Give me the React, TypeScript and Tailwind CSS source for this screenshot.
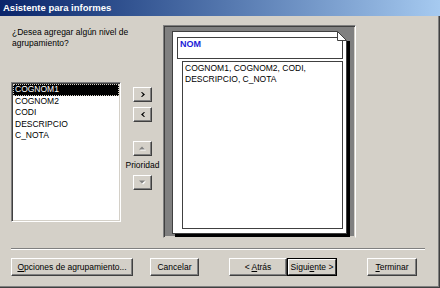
import React from "react";

const raised =
  "bg-[#d4d0c8] border border-t-white border-l-white border-r-[#404040] border-b-[#404040] shadow-[inset_-1px_-1px_#808080]";

function WinButton({
  children,
  className = "",
  isDefault = false,
}: {
  children: React.ReactNode;
  className?: string;
  isDefault?: boolean;
}) {
  if (isDefault) {
    return (
      <div className={`h-[18px] border border-black ${className}`}>
        <div className="flex h-full items-center justify-center border border-t-white border-l-white border-r-[#404040] border-b-[#404040] bg-[#d4d0c8]">
          {children}
        </div>
      </div>
    );
  }
  return (
    <div className={`flex h-[18px] items-center justify-center ${raised} ${className}`}>
      {children}
    </div>
  );
}

function SmallButton({ children }: { children: React.ReactNode }) {
  return (
    <div className={`flex h-[15px] w-[19px] items-center justify-center ${raised}`}>
      {children}
    </div>
  );
}

function Chevron({ dir }: { dir: "left" | "right" }) {
  return (
    <svg width="4" height="5" viewBox="0 0 4 5">
      {dir === "right" ? (
        <path d="M0 0h1l3 2.5-3 2.5H0l2-2.5z" fill="#000" />
      ) : (
        <path d="M4 0H3L0 2.5 3 5h1L2 2.5z" fill="#000" />
      )}
    </svg>
  );
}

function GrayArrow({ dir }: { dir: "up" | "down" }) {
  const d = dir === "up" ? "M1 4.5 4 1.5 7 4.5z" : "M1 1.5 4 4.5 7 1.5z";
  return (
    <svg width="9" height="7" viewBox="0 0 9 7">
      <path d={d} fill="#fff" transform="translate(1 1)" />
      <path d={d} fill="#808080" />
    </svg>
  );
}

const fields = ["COGNOM1", "COGNOM2", "CODI", "DESCRIPCIO", "C_NOTA"];

export default function App() {
  return (
    <div
      className="flex h-[288px] w-[440px] flex-col bg-[#d4d0c8] text-[8.5px] text-black shadow-[inset_-1px_-1px_#404040,inset_-2px_-2px_#808080]"
      style={{ fontFamily: '"Liberation Sans", Arial, sans-serif' }}
    >
      {/* title bar */}
      <div className="flex h-[16px] items-center bg-linear-to-r from-[#0a246a] to-[#a6caf0] pl-[3px] text-[9.5px] font-bold text-white">
        Asistente para informes
      </div>

      <div className="flex px-[11px] pt-[9px]">
        {/* left column */}
        <div className="flex w-[152px] flex-col">
          <p className="mt-[2px] ml-[1px] w-[130px] leading-[11px]">
            ¿Desea agregar algún nivel de agrupamiento?
          </p>

          <div className="mt-[33px] flex">
            <div className="h-[140px] w-[110px] border border-t-[#808080] border-l-[#808080] border-r-white border-b-white bg-white shadow-[inset_1px_1px_#404040,inset_-1px_-1px_#d4d0c8]">
              <ul className="px-[1px] pt-[1px]">
                {fields.map((f, i) => (
                  <li
                    key={f}
                    className={`pl-[2px] leading-[11.5px] ${
                      i === 0
                        ? "bg-black text-white outline-1 -outline-offset-1 outline-dotted outline-[#d4d0c8]"
                        : ""
                    }`}
                  >
                    {f}
                  </li>
                ))}
              </ul>
            </div>

            <div className="ml-[2px] flex w-[39px] flex-col items-center pt-[5px]">
              <SmallButton>
                <Chevron dir="right" />
              </SmallButton>
              <div className="mt-[5px]">
                <SmallButton>
                  <Chevron dir="left" />
                </SmallButton>
              </div>
              <div className="mt-[19px]">
                <SmallButton>
                  <GrayArrow dir="up" />
                </SmallButton>
              </div>
              <div className="flex h-[19px] items-center">Prioridad</div>
              <SmallButton>
                <GrayArrow dir="down" />
              </SmallButton>
            </div>
          </div>
        </div>

        {/* preview panel */}
        <div className="h-[213px] w-[193px] border border-t-[#808080] border-l-[#808080] border-r-white border-b-[#d4d0c8] bg-[#808080] shadow-[inset_1px_1px_#404040,inset_-1px_-1px_#d4d0c8]">
          <div className="relative mt-[5px] ml-[8px] h-[203px] w-[175px] border border-[#404040] bg-white pt-[5px] pl-[4px] shadow-[3px_3px_0_#000]">
            {/* folded corner */}
            <svg
              className="absolute -top-[1px] -right-[5px]"
              width="14"
              height="14"
              viewBox="0 0 14 14"
            >
              <path d="M0 0H14V14H13V10H10Z" fill="#808080" />
              <path d="M0.5 0.5V9.5H9.5Z" fill="#fff" stroke="#404040" strokeWidth="1" />
            </svg>

            <div className="h-[22px] w-[166px] border border-[#404040] bg-white pt-[1px] pl-[2px] text-[9px] font-bold leading-[11px] text-[#1c1cd8]">
              NOM
            </div>
            <div className="mt-[2px] ml-[5px] h-[168px] w-[161px] border border-[#404040] pt-[1px] pl-[2px] leading-[11px]">
              COGNOM1, COGNOM2, CODI,
              <br />
              DESCRIPCIO, C_NOTA
            </div>
          </div>
        </div>
      </div>

      {/* separator */}
      <div className="mt-[10px] ml-[11px] h-[2px] w-[414px] border-t border-b border-t-[#808080] border-b-white" />

      {/* buttons */}
      <div className="mt-[8px] ml-[11px] flex">
        <WinButton className="w-[122px]">
          <span>
            <span className="underline">O</span>pciones de agrupamiento...
          </span>
        </WinButton>
        <WinButton className="ml-[17px] w-[49px]">Cancelar</WinButton>
        <WinButton className="ml-[30px] w-[58px]">
          <span>
            &lt; <span className="underline">A</span>trás
          </span>
        </WinButton>
        <WinButton className="w-[50px]" isDefault>
          <span>
            Sigui<span className="underline">e</span>nte &gt;
          </span>
        </WinButton>
        <WinButton className="ml-[30px] w-[50px]">
          <span>
            <span className="underline">T</span>erminar
          </span>
        </WinButton>
      </div>
    </div>
  );
}
